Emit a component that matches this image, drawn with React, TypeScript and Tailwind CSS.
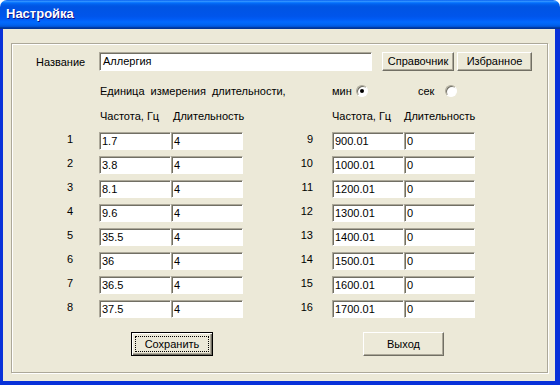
import React from "react";

const leftRows = [
  ["1", "1.7", "4"],
  ["2", "3.8", "4"],
  ["3", "8.1", "4"],
  ["4", "9.6", "4"],
  ["5", "35.5", "4"],
  ["6", "36", "4"],
  ["7", "36.5", "4"],
  ["8", "37.5", "4"],
];
const rightRows = [
  ["9", "900.01", "0"],
  ["10", "1000.01", "0"],
  ["11", "1200.01", "0"],
  ["12", "1300.01", "0"],
  ["13", "1400.01", "0"],
  ["14", "1500.01", "0"],
  ["15", "1600.01", "0"],
  ["16", "1700.01", "0"],
];

function Field({ value, w }: { value: string; w: string }) {
  return (
    <div
      className={`${w} h-[18px] bg-white border border-t-[#ACA899] border-l-[#ACA899] border-r-white border-b-white shadow-[inset_1px_1px_0_#716F64] flex items-center pl-[2px] leading-[14px] overflow-hidden whitespace-nowrap`}
    >
      {value}
    </div>
  );
}

function Btn({ label, w, h, isDefault }: { label: string; w: string; h: string; isDefault?: boolean }) {
  if (isDefault) {
    return (
      <div
        className={`${w} ${h} relative flex items-center justify-center bg-[#ECE9D8] border border-black shadow-[inset_1px_1px_0_#fff,inset_-1px_-1px_0_#716F64,inset_-2px_-2px_0_#ACA899]`}
      >
        <div className="absolute inset-[3px] border border-dotted border-black" />
        <span className="relative">{label}</span>
      </div>
    );
  }
  return (
    <div
      className={`${w} ${h} flex items-center justify-center bg-[#ECE9D8] border border-t-white border-l-white border-r-[#716F64] border-b-[#716F64] shadow-[inset_-1px_-1px_0_#ACA899]`}
    >
      {label}
    </div>
  );
}

function Radio({ checked }: { checked?: boolean }) {
  return (
    <div className="w-[12px] h-[12px] rounded-full bg-white border border-t-[#ACA899] border-l-[#ACA899] border-r-white border-b-white shadow-[inset_1px_1px_0_#716F64] flex items-center justify-center">
      {checked && <div className="w-[4px] h-[4px] rounded-full bg-black" />}
    </div>
  );
}

export default function App() {
  return (
    <div className="w-[560px] h-[385px] flex flex-col bg-white font-['Liberation_Sans',Arial,sans-serif] text-[11px] text-black">
      <div className="h-[29px] shrink-0 rounded-t-[7px] bg-[linear-gradient(to_bottom,#0058EE_0%,#3593FF_4%,#288EFF_6%,#127DFF_8%,#036FFC_10%,#0262EE_14%,#0057E5_20%,#0054E3_24%,#0055EB_56%,#005BF5_66%,#026AFE_76%,#0062EF_86%,#0052D6_92%,#0040AB_94%,#003092_100%)] flex items-center pl-[6px] pb-[1px]">
        <span className="text-white font-bold text-[13px] [text-shadow:1px_1px_0_#0F1089]">Настройка</span>
      </div>
      <div className="flex-1 flex bg-[#ECE9D8] border-l-[3px] border-r-[5px] border-b-[4px] border-l-[#0831D9] border-r-[#0831D9] border-b-[#0831D9] pl-[8px] pt-[14px] pr-[7px] pb-[8px]">
        <div className="flex-1 flex flex-col border border-[#ACA899] shadow-[inset_1px_1px_0_#fff,1px_1px_0_#fff]">
          {/* Row: name */}
          <div className="flex items-center h-[19px] mt-[8px]">
            <div className="w-[87px] pl-[24px] leading-[14px]">Название</div>
            <div className="w-[273px] h-[19px] bg-white border border-t-[#ACA899] border-l-[#ACA899] border-r-white border-b-white shadow-[inset_1px_1px_0_#716F64] flex items-center pl-[3px]">
              Аллергия
            </div>
            <div className="ml-[10px]">
              <Btn label="Справочник" w="w-[72px]" h="h-[19px]" />
            </div>
            <div className="ml-[3px]">
              <Btn label="Избранное" w="w-[75px]" h="h-[19px]" />
            </div>
          </div>
          {/* Row: units */}
          <div className="flex items-center h-[14px] mt-[13px] leading-[14px]">
            <div className="w-[232px] ml-[88px] [word-spacing:3px]">Единица измерения длительности,</div>
            <div className="w-[24px]">мин</div>
            <Radio checked />
            <div className="w-[27px] ml-[50px]">сек</div>
            <Radio />
          </div>
          {/* Headers */}
          <div className="flex items-center h-[14px] mt-[11px] leading-[14px]">
            <div className="w-[73px] ml-[88px]">Частота, Гц</div>
            <div className="w-[159px]">Длительность</div>
            <div className="w-[72px]">Частота, Гц</div>
            <div>Длительность</div>
          </div>
          {/* Data rows */}
          <div className="flex flex-col gap-[6px] mt-[9px]">
            {leftRows.map((l, i) => {
              const r = rightRows[i];
              return (
                <div key={l[0]} className="flex items-start h-[18px]">
                  <div className="w-[61px] text-right leading-[14px]">{l[0]}</div>
                  <div className="ml-[26px] flex">
                    <Field value={l[1]} w="w-[72px]" />
                    <Field value={l[2]} w="w-[72px]" />
                  </div>
                  <div className="w-[70px] text-right leading-[14px]">{r[0]}</div>
                  <div className="ml-[19px] flex">
                    <Field value={r[1]} w="w-[72px]" />
                    <Field value={r[2]} w="w-[71px]" />
                  </div>
                </div>
              );
            })}
          </div>
          {/* Buttons */}
          <div className="flex mt-[14px]">
            <div className="ml-[119px]">
              <Btn label="Сохранить" w="w-[82px]" h="h-[24px]" isDefault />
            </div>
            <div className="ml-[150px]">
              <Btn label="Выход" w="w-[81px]" h="h-[24px]" />
            </div>
          </div>
        </div>
      </div>
    </div>
  );
}
